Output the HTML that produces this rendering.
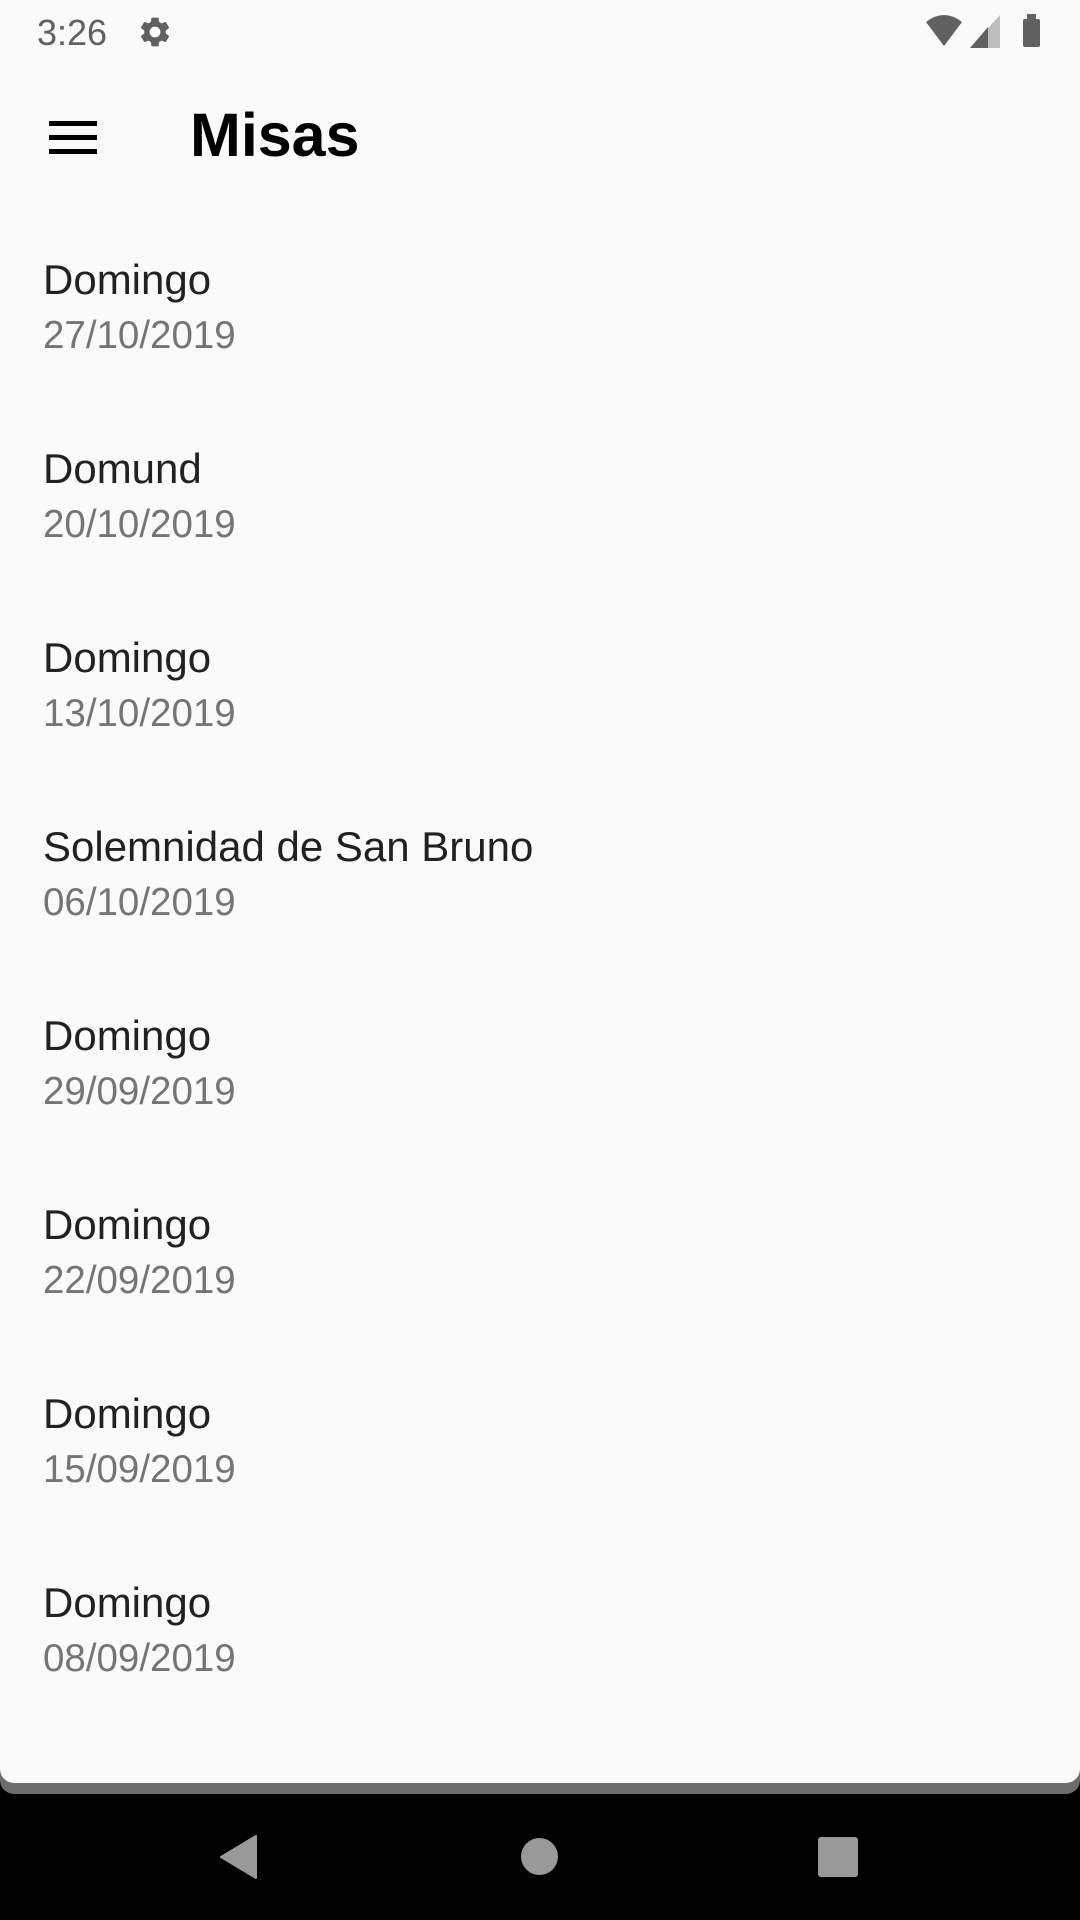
<!DOCTYPE html>
<html><head><meta charset="utf-8"><style>
html,body{margin:0;padding:0;}
body{width:1080px;height:1920px;position:relative;overflow:hidden;background:#000;font-family:"Liberation Sans",sans-serif;}
.sheet{position:absolute;left:0;top:0;width:1080px;height:1794px;background:#6d6d6d;border-radius:0 0 14px 14px;}
.content{position:absolute;left:0;top:0;width:1080px;height:1783px;background:#fafafa;border-radius:0 0 14px 14px;}
.t{position:absolute;left:43px;font-size:42px;line-height:42px;color:#212121;white-space:nowrap;}
.s{position:absolute;left:43px;font-size:38.5px;line-height:38px;color:#757575;white-space:nowrap;}
</style></head><body>
<div class="sheet"></div>
<div class="content">
  <div style="position:absolute;left:37px;top:15px;font-size:36px;line-height:36px;color:#616161;">3:26</div>
  <svg style="position:absolute;left:137px;top:14px" width="36" height="36" viewBox="0 0 24 24"><path fill="#616161" d="M19.14 12.940c.04-.3.06-.61.06-.94 0-.32-.02-.64-.07-.94l2.030-1.580a.49.49 0 00.12-.61l-1.920-3.320a.488.488 0 00-.59-.22l-2.390.96c-.5-.38-1.030-.7-1.620-.94l-.36-2.540a.484.484 0 00-.48-.41h-3.840c-.24 0-.43.17-.47.41l-.36 2.540c-.59.24-1.130.57-1.620.94l-2.390-.96c-.22-.08-.47 0-.59.22L2.740 8.870c-.12.21-.08.47.12.61l2.030 1.580c-.05.3-.09.63-.09.94s.02.64.07.94l-2.030 1.580a.49.49 0 00-.12.61l1.920 3.320c.12.22.37.29.59.22l2.390-.96c.5.38 1.030.7 1.620.94l.36 2.540c.05.24.24.41.48.41h3.840c.24 0 .44-.17.47-.41l.36-2.540c.59-.24 1.130-.56 1.620-.94l2.390.96c.22.08.47 0 .59-.22l1.920-3.320c.12-.22.07-.47-.12-.61l-2.010-1.580zM12 15.6c-1.980 0-3.6-1.620-3.6-3.6s1.620-3.6 3.6-3.6 3.6 1.620 3.6 3.6-1.620 3.6-3.6 3.6z"/></svg>
  <svg style="position:absolute;left:924px;top:14px" width="40" height="34" viewBox="0 0 40 34"><path fill="#616161" d="M2 8 Q20 -6 38 8 L20 32 Z"/></svg>
  <svg style="position:absolute;left:970px;top:15px" width="32" height="33" viewBox="0 0 32 33"><path fill="#bdbdbd" d="M30 0 V33 H0 Z"/><path fill="#616161" d="M18 12 V33 H0 Z"/></svg>
  <div style="position:absolute;left:1023px;top:19px;width:17px;height:28px;background:#616161;border-radius:2px;"></div>
  <div style="position:absolute;left:1027px;top:14px;width:9px;height:6px;background:#616161;"></div>

  <div style="position:absolute;left:49px;top:121px;width:48px;height:5px;background:#000;"></div>
  <div style="position:absolute;left:49px;top:135px;width:48px;height:5px;background:#000;"></div>
  <div style="position:absolute;left:49px;top:149px;width:48px;height:5px;background:#000;"></div>
  <div style="position:absolute;left:190px;top:105px;font-size:61px;line-height:61px;font-weight:bold;color:#000;">Misas</div>

  <div class="t" style="top:259px">Domingo</div><div class="s" style="top:317px">27/10/2019</div>
  <div class="t" style="top:448px">Domund</div><div class="s" style="top:506px">20/10/2019</div>
  <div class="t" style="top:637px">Domingo</div><div class="s" style="top:695px">13/10/2019</div>
  <div class="t" style="top:826px">Solemnidad de San Bruno</div><div class="s" style="top:884px">06/10/2019</div>
  <div class="t" style="top:1015px">Domingo</div><div class="s" style="top:1073px">29/09/2019</div>
  <div class="t" style="top:1204px">Domingo</div><div class="s" style="top:1262px">22/09/2019</div>
  <div class="t" style="top:1393px">Domingo</div><div class="s" style="top:1451px">15/09/2019</div>
  <div class="t" style="top:1582px">Domingo</div><div class="s" style="top:1640px">08/09/2019</div>
</div>
<svg style="position:absolute;left:218px;top:1835px" width="40" height="44" viewBox="0 0 40 44"><path fill="#999" d="M38 1 V43 L3 22 Z" stroke="#999" stroke-width="2" stroke-linejoin="round"/></svg>
<div style="position:absolute;left:521px;top:1838px;width:37px;height:37px;border-radius:50%;background:#999;"></div>
<div style="position:absolute;left:818px;top:1837px;width:40px;height:40px;border-radius:3px;background:#999;"></div>
</body></html>
